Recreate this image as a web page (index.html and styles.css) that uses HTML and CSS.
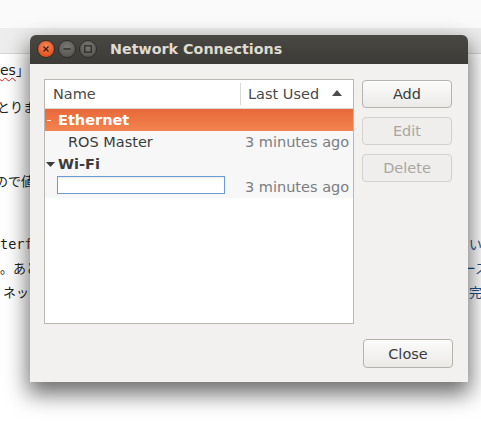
FILE: index.html
```html
<!DOCTYPE html>
<html>
<head>
<meta charset="utf-8">
<link rel="stylesheet" href="styles.css">
</head>
<body>
<div class="doc">
  <div class="doc-head"></div>
  <div class="doc-bar"></div>
  <div class="doc-text">
    <div class="line g1"><span class="lt"><span class="squig">es</span>」</span><span class="rt"></span></div>
    <div class="line g2"><span class="lt s3">とりま</span><span class="rt"></span></div>
    <div class="line g3"><span class="lt s5">ので値</span><span class="rt"></span></div>
    <div class="line g4"><span class="lt mono">ter<span class="kw">f</span></span><span class="rt r2">てい</span></div>
    <div class="line"><span class="lt">。あと</span><span class="rt r8">ース</span></div>
    <div class="line"><span class="lt">&nbsp;ネット</span><span class="rt r2">完</span></div>
  </div>
</div>

<div class="window">
  <div class="titlebar">
    <div class="ctl ctl-close">
      <svg width="8" height="8" viewBox="0 0 8 8"><path d="M1.5 1.5 L6.5 6.5 M6.5 1.5 L1.5 6.5" stroke="#3a1d12" stroke-width="1.3" fill="none"/></svg>
    </div>
    <div class="ctl ctl-grey">
      <svg width="10" height="10" viewBox="0 0 10 10"><path d="M1.5 5 H8.5" stroke="#2e2d2a" stroke-width="1.4" fill="none"/></svg>
    </div>
    <div class="ctl ctl-grey">
      <svg width="10" height="10" viewBox="0 0 10 10"><rect x="1.8" y="1.8" width="6.4" height="6.4" stroke="#2e2d2a" stroke-width="1.3" fill="none"/></svg>
    </div>
    <div class="title">Network Connections</div>
  </div>
  <div class="content">
    <div class="tree">
      <div class="thead">
        <div class="c1 hname">Name</div>
        <div class="c2 hlast">
          <span>Last Used</span>
          <svg class="sort" width="10" height="6" viewBox="0 0 10 6"><path d="M0 6 L5 0 L10 6 Z" fill="#4c4c4c"/></svg>
        </div>
      </div>
      <div class="row sel">
        <div class="c1"><span class="exp"><span class="dash"></span></span><span class="group">Ethernet</span></div>
        <div class="c2"></div>
      </div>
      <div class="rows">
        <div class="row">
          <div class="c1 item">ROS Master</div>
          <div class="c2 when">3 minutes ago</div>
        </div>
        <div class="row">
          <div class="c1"><span class="exp"><svg width="9" height="5" viewBox="0 0 9 5"><path d="M0 0 H9 L4.5 5 Z" fill="#3c3c3c"/></svg></span><span class="group dark">Wi-Fi</span></div>
          <div class="c2"></div>
        </div>
        <div class="row row-entry">
          <div class="c1 entry-cell"><div class="entry"></div></div>
          <div class="c2 when">3 minutes ago</div>
        </div>
      </div>
    </div>
    <div class="btns">
      <button class="btn">Add</button>
      <button class="btn" disabled>Edit</button>
      <button class="btn" disabled>Delete</button>
    </div>
    <div class="foot">
      <button class="btn">Close</button>
    </div>
  </div>
</div>
</body>
</html>
```

FILE: styles.css
```css
html, body {
  margin: 0;
  padding: 0;
}
body {
  width: 481px;
  height: 422px;
  overflow: hidden;
  background: #ffffff;
  position: relative;
  font-family: "DejaVu Sans", sans-serif;
}

/* background document */
.doc {
  display: flex;
  flex-direction: column;
}
.doc-head {
  height: 28px;
  background: #fafafa;
}
.doc-bar {
  height: 25px;
  background: #ededed;
  border-bottom: 1px solid #d6d6d6;
}
.doc-text {
  display: flex;
  flex-direction: column;
  font-family: "Noto Sans CJK JP", "Noto Sans", sans-serif;
  font-size: 13px;
  color: #222;
}
.line {
  height: 24px;
  line-height: 24px;
  display: flex;
  justify-content: space-between;
  white-space: nowrap;
}
.g1 { margin-top: 4px; }
.g2 { margin-top: 13px; }
.g3 { margin-top: 50px; }
.g4 { margin-top: 39px; }
.lt { margin-left: 0; }
.s3 { margin-left: -3px; }
.s5 { margin-left: -5px; }
.rt { color: #1c4f8c; }
.r2 { margin-right: -1px; }
.r8 { margin-right: -7px; }
.mono {
  font-family: "DejaVu Sans Mono", monospace;
  font-size: 13.5px;
}
.kw { color: #7a3c00; }
.squig {
  text-decoration: underline wavy #e0201a;
  text-decoration-thickness: 1px;
  text-underline-offset: 2px;
  font-family: "DejaVu Sans", sans-serif;
  font-size: 14px;
}

/* window */
.window {
  position: absolute;
  left: 30px;
  top: 35px;
  width: 438px;
  height: 347px;
  display: flex;
  flex-direction: column;
  border-radius: 6px 6px 0 0;
  box-shadow: 0 10px 22px 2px rgba(0, 0, 0, 0.58);
  background: #f2f1f0;
}
.titlebar {
  height: 29px;
  flex: none;
  display: flex;
  align-items: center;
  gap: 3px;
  padding-left: 7px;
  border-radius: 6px 6px 0 0;
  background: linear-gradient(#4a4843, #3c3b37);
}
.ctl {
  width: 18px;
  height: 18px;
  box-sizing: border-box;
  border-radius: 50%;
  display: flex;
  align-items: center;
  justify-content: center;
  margin-top: -1px;
}
.ctl-close {
  background: radial-gradient(circle at 50% 35%, #f7875c, #e2531f 70%);
  border: 1px solid #2f2d2a;
}
.ctl-grey {
  background: radial-gradient(circle at 50% 35%, #7a7873, #5a5853 75%);
  border: 1px solid #2f2d2a;
}
.title {
  margin-left: 10px;
  color: #dfdbd2;
  font-weight: bold;
  font-size: 14.3px;
  margin-top: -1px;
}

.content {
  flex: 1;
  display: grid;
  grid-template-columns: 310px 1fr;
  grid-template-rows: 1fr auto;
  column-gap: 8px;
  row-gap: 15px;
  padding: 15px 15px 14px 14px;
  font-size: 14.5px;
  color: #3c3c3c;
}
.tree {
  grid-row: 1;
  grid-column: 1;
  border: 1px solid #bbb7b1;
  background: #ffffff;
  display: flex;
  flex-direction: column;
}
.thead {
  height: 28px;
  display: flex;
  border-bottom: 1px solid #dcd9d4;
  color: #4a4a4a;
}
.c1 {
  width: 195px;
  flex: none;
  display: flex;
  align-items: center;
}
.c2 {
  flex: 1;
  display: flex;
  align-items: center;
}
.hname { padding-left: 8px; box-sizing: border-box; }
.hlast {
  margin: 3px 0;
  border-left: 1px solid #dcd9d4;
  padding-left: 7px;
  padding-right: 11px;
  justify-content: space-between;
}
.sort { margin-top: -2px; }

.row {
  height: 22px;
  display: flex;
}
.sel {
  background: linear-gradient(#e8683a, #f2844f);
  color: #ffffff;
}
.rows {
  background: #f7f7f7;
}
.row-entry { height: 23px; }
.exp {
  width: 13px;
  flex: none;
  display: flex;
  align-items: center;
  padding-left: 1px;
  box-sizing: border-box;
}
.dash {
  width: 4px;
  height: 1px;
  margin-left: 1px;
  background: #ffe6dc;
}
.group {
  font-weight: bold;
}
.dark { color: #3c3c3c; }
.item { padding-left: 23px; box-sizing: border-box; }
.when {
  padding-left: 5px;
  color: #7a7e83;
}
.entry-cell {
  padding-left: 12px;
  box-sizing: border-box;
  align-items: flex-start;
}
.entry {
  width: 168px;
  height: 18px;
  box-sizing: border-box;
  border: 1px solid #6a9bd4;
  background: #ffffff;
  box-shadow: inset 0 1px 1px rgba(0,0,0,0.08);
  margin-top: 1px;
}

.btns {
  grid-row: 1;
  grid-column: 2;
  display: flex;
  flex-direction: column;
  gap: 9px;
  padding-top: 1px;
}
.foot {
  grid-row: 2;
  grid-column: 2;
  display: flex;
  padding-left: 1px;
}
.btn {
  width: 90px;
  height: 28px;
  box-sizing: border-box;
  border: 1px solid #b6b2ac;
  border-radius: 4px;
  background: linear-gradient(#fbfbfa, #ebeae8);
  font-family: "DejaVu Sans", sans-serif;
  font-size: 14.5px;
  color: #3c3c3c;
  padding: 0;
  box-shadow: inset 0 1px 0 #ffffff;
}
.btn:disabled {
  border-color: #d4d1cc;
  background: #efeeec;
  color: #a9a6a1;
  box-shadow: none;
}
.foot .btn { height: 29px; }
```
